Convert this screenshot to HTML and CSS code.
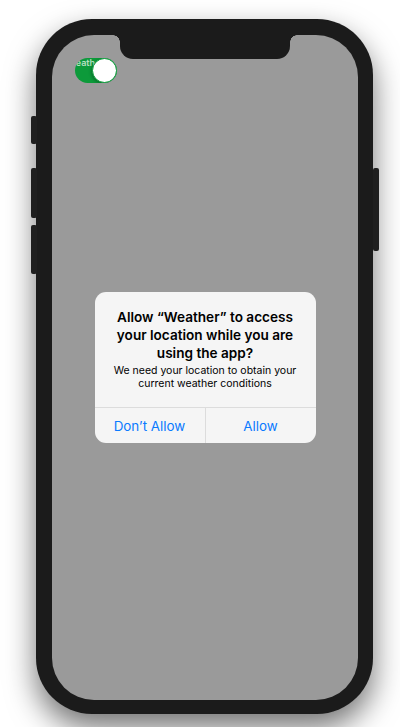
FILE: index.html
```html
<!DOCTYPE html>
<html>
<head>
<meta charset="utf-8">
<link rel="stylesheet" href="styles.css">
</head>
<body>
<div class="stage">
  <div class="phone">
    <span class="btn btn-mute"></span>
    <span class="btn btn-vol-up"></span>
    <span class="btn btn-vol-down"></span>
    <span class="btn btn-power"></span>
    <div class="screen">
      <div class="notch"></div>
      <div class="toggle">
        <span class="toggle-label">Weather</span>
        <span class="thumb"></span>
      </div>
      <div class="overlay">
        <div class="alert">
          <div class="alert-body">
            <div class="alert-title">Allow “Weather” to access your location while you are using the app?</div>
            <div class="alert-msg">We need your location to obtain your current weather conditions</div>
          </div>
          <div class="alert-actions">
            <div class="action">Don’t Allow</div>
            <div class="action">Allow</div>
          </div>
        </div>
      </div>
    </div>
  </div>
</div>
</body>
</html>
```

FILE: styles.css
```css
* { box-sizing: border-box; }
html, body {
  margin: 0;
  padding: 0;
  background: #ffffff;
  width: 400px;
  height: 727px;
  overflow: hidden;
  font-family: Inter, "Liberation Sans", sans-serif;
}
.stage {
  padding: 19px 0 0 36px;
}
.phone {
  position: relative;
  width: 337px;
  height: 695px;
  background: #1b1b1b;
  border-radius: 56px;
  padding: 16px 15px 14px 16px;
  box-shadow: 0 14px 30px rgba(0, 0, 0, 0.55);
}
.btn {
  position: absolute;
  background: #1f1f1f;
  width: 6px;
  border-radius: 2px;
}
.btn-mute { left: -5px; top: 97px; height: 28px; }
.btn-vol-up { left: -5px; top: 149px; height: 50px; }
.btn-vol-down { left: -5px; top: 206px; height: 49px; }
.btn-power { right: -6px; top: 149px; height: 83px; }
.screen {
  position: relative;
  width: 306px;
  height: 665px;
  background: #9a9a9a;
  border-radius: 42px;
  overflow: hidden;
  padding: 23px 0 0 23px;
}
.notch {
  position: absolute;
  top: 0;
  left: 68px;
  width: 170px;
  height: 24px;
  background: #1b1b1b;
  border-radius: 0 0 13px 13px;
}
.notch::before,
.notch::after {
  content: "";
  position: absolute;
  top: 0;
  width: 7px;
  height: 7px;
}
.notch::before {
  left: -7px;
  background: radial-gradient(circle at 0 100%, transparent 6.5px, #1b1b1b 7px);
}
.notch::after {
  right: -7px;
  background: radial-gradient(circle at 100% 100%, transparent 6.5px, #1b1b1b 7px);
}
.toggle {
  position: relative;
  width: 42px;
  height: 25px;
  border-radius: 13px;
  background: #0c9a3a;
  overflow: hidden;
}
.toggle-label {
  position: absolute;
  left: -8px;
  top: 0;
  font-size: 9px;
  font-weight: 600;
  line-height: 10px;
  color: rgba(255, 255, 255, 0.7);
  white-space: nowrap;
}
.thumb {
  position: absolute;
  right: 0;
  top: 0;
  width: 25px;
  height: 25px;
  border-radius: 50%;
  background: #ffffff;
  border: 1px solid #0c9a3a;
  box-shadow: -1px 1px 3px rgba(0, 0, 0, 0.25);
}
.overlay {
  position: absolute;
  inset: 0;
  display: flex;
  align-items: center;
  justify-content: center;
}
.alert {
  width: 221px;
  background: #f5f5f5;
  border-radius: 11px;
  overflow: hidden;
}
.alert-body {
  padding: 16px 12px 17px;
  text-align: center;
  color: #000;
}
.alert-title {
  font-size: 13.6px;
  font-weight: 600;
  line-height: 18px;
}
.alert-msg {
  margin-top: 3px;
  font-size: 10.5px;
  line-height: 12.5px;
}
.alert-actions {
  display: flex;
  border-top: 1px solid #dcdcdc;
}
.action {
  flex: 1;
  height: 35px;
  display: flex;
  align-items: center;
  justify-content: center;
  color: #0a7aff;
  font-size: 13.4px;
}
.action + .action {
  border-left: 1px solid #dcdcdc;
}
```
